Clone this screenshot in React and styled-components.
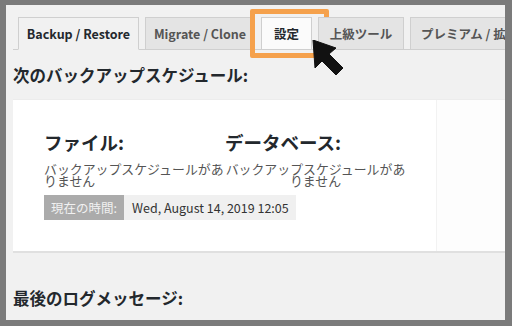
import React from "react";
import styled, { createGlobalStyle } from "styled-components";

const GlobalStyle = createGlobalStyle`
  html, body {
    margin: 0;
    padding: 0;
    background: #7b7b7b;
  }
  body {
    font-family: "Noto Sans CJK JP", "Noto Sans", sans-serif;
  }
`;

const Frame = styled.div`
  width: 512px;
  height: 326px;
  box-sizing: border-box;
  padding: 5px 7px 6px 6px;
  background: #7b7b7b;
`;

const Panel = styled.div`
  height: 315px;
  background: #f1f1f1;
  padding-left: 7px;
  overflow: hidden;
`;

const TabNav = styled.div`
  display: flex;
  align-items: flex-end;
  gap: 6px;
  margin-top: 12px;
  height: 32px;
  padding-left: 5px;
  border-bottom: 1px solid #cfcfcf;
  white-space: nowrap;
`;

const Tab = styled.div`
  position: relative;
  box-sizing: border-box;
  width: ${(p) => (p.w ? `${p.w}px` : "auto")};
  height: 33px;
  margin-bottom: -1px;
  padding: 0 10px;
  display: flex;
  align-items: center;
  justify-content: ${(p) => (p.w ? "center" : "flex-start")};
  font-size: 12.5px;
  font-weight: ${(p) => (p.active ? 700 : 600)};
  color: ${(p) => (p.active || p.highlight ? "#23282d" : "#555")};
  background: ${(p) => (p.active ? "#f1f1f1" : p.highlight ? "#fbfbfb" : "#e4e4e4")};
  border: 1px solid #cfcfcf;
  border-bottom-color: ${(p) => (p.active ? "#f1f1f1" : "#cfcfcf")};
  flex-shrink: 0;
`;

const Highlight = styled.div`
  position: absolute;
  left: -12px;
  top: -9px;
  width: 79px;
  height: 49px;
  box-sizing: border-box;
  border: 5px solid #f5a14c;
  border-radius: 2px;
  pointer-events: none;
`;

const Pointer = styled.svg`
  position: absolute;
  left: 50px;
  top: 22px;
  width: 34px;
  height: 36px;
  z-index: 2;
`;

const SectionTitle = styled.h2`
  margin: ${(p) => p.top}px 0 0;
  font-size: 16.5px;
  line-height: 24px;
  font-weight: 700;
  color: #23282d;
`;

const CardRow = styled.div`
  display: flex;
  margin-top: 13px;
  height: 151px;
  border-bottom: 2px solid #e0e0e0;
  box-shadow: 0 -1px 0 #ececec;
`;

const Card = styled.div`
  width: 424px;
  flex-shrink: 0;
  box-sizing: border-box;
  background: #fff;
  border-right: 1px solid #f2f2f2;
  padding: 29px 0 0 31px;
`;

const SideCard = styled.div`
  flex: 1;
  background: #fdfdfd;
`;

const Columns = styled.div`
  display: grid;
  grid-template-columns: 181px 181px;
`;

const Column = styled.div`
  text-align: ${(p) => (p.center ? "center" : "left")};
`;

const ColumnTitle = styled.h3`
  margin: 0;
  font-size: 18.5px;
  line-height: 26px;
  font-weight: 700;
  color: #23282d;
  text-align: left;
`;

const Note = styled.p`
  margin: 8px 0 0;
  font-size: 12.9px;
  line-height: 12px;
  color: #555;
`;

const TimeRow = styled.div`
  display: flex;
  margin-top: 8px;
  height: 25px;
  font-size: 12.5px;
  line-height: 25px;
`;

const TimeLabel = styled.span`
  width: 80px;
  box-sizing: border-box;
  padding-left: 7px;
  background: #ababab;
  color: #f1f1f1;
`;

const TimeValue = styled.span`
  padding: 0 7px 0 8px;
  background: #f0f0f0;
  color: #333;
`;

const tabs = [
  { label: "Backup / Restore", active: true, w: 121 },
  { label: "Migrate / Clone", w: 110 },
  { label: "設定", highlight: true, w: 51 },
  { label: "上級ツール", w: 86 },
  { label: "プレミアム / 拡張機能" },
];

const App = () => {
  return (
    <Frame>
      <GlobalStyle />
      <Panel>
        <TabNav>
          {tabs.map((t) => (
            <Tab key={t.label} active={t.active} highlight={t.highlight} w={t.w}>
              {t.label}
              {t.highlight && (
                <>
                  <Highlight />
                  <Pointer viewBox="0 0 34 36">
                    <polygon
                      points="1,0 3,28 10,21 24,35 31,28 17,14 24,8"
                      fill="#111"
                      stroke="#111"
                      strokeWidth="1"
                      strokeLinejoin="round"
                    />
                  </Pointer>
                </>
              )}
            </Tab>
          ))}
        </TabNav>
        <SectionTitle top={13}>次のバックアップスケジュール:</SectionTitle>
        <CardRow>
          <Card>
            <Columns>
              <Column>
                <ColumnTitle>ファイル:</ColumnTitle>
                <Note>バックアップスケジュールがありません</Note>
              </Column>
              <Column center>
                <ColumnTitle>データベース:</ColumnTitle>
                <Note>バックアップスケジュールがありません</Note>
              </Column>
            </Columns>
            <TimeRow>
              <TimeLabel>現在の時間:</TimeLabel>
              <TimeValue>Wed, August 14, 2019 12:05</TimeValue>
            </TimeRow>
          </Card>
          <SideCard />
        </CardRow>
        <SectionTitle top={33}>最後のログメッセージ:</SectionTitle>
      </Panel>
    </Frame>
  );
};

export default App;
